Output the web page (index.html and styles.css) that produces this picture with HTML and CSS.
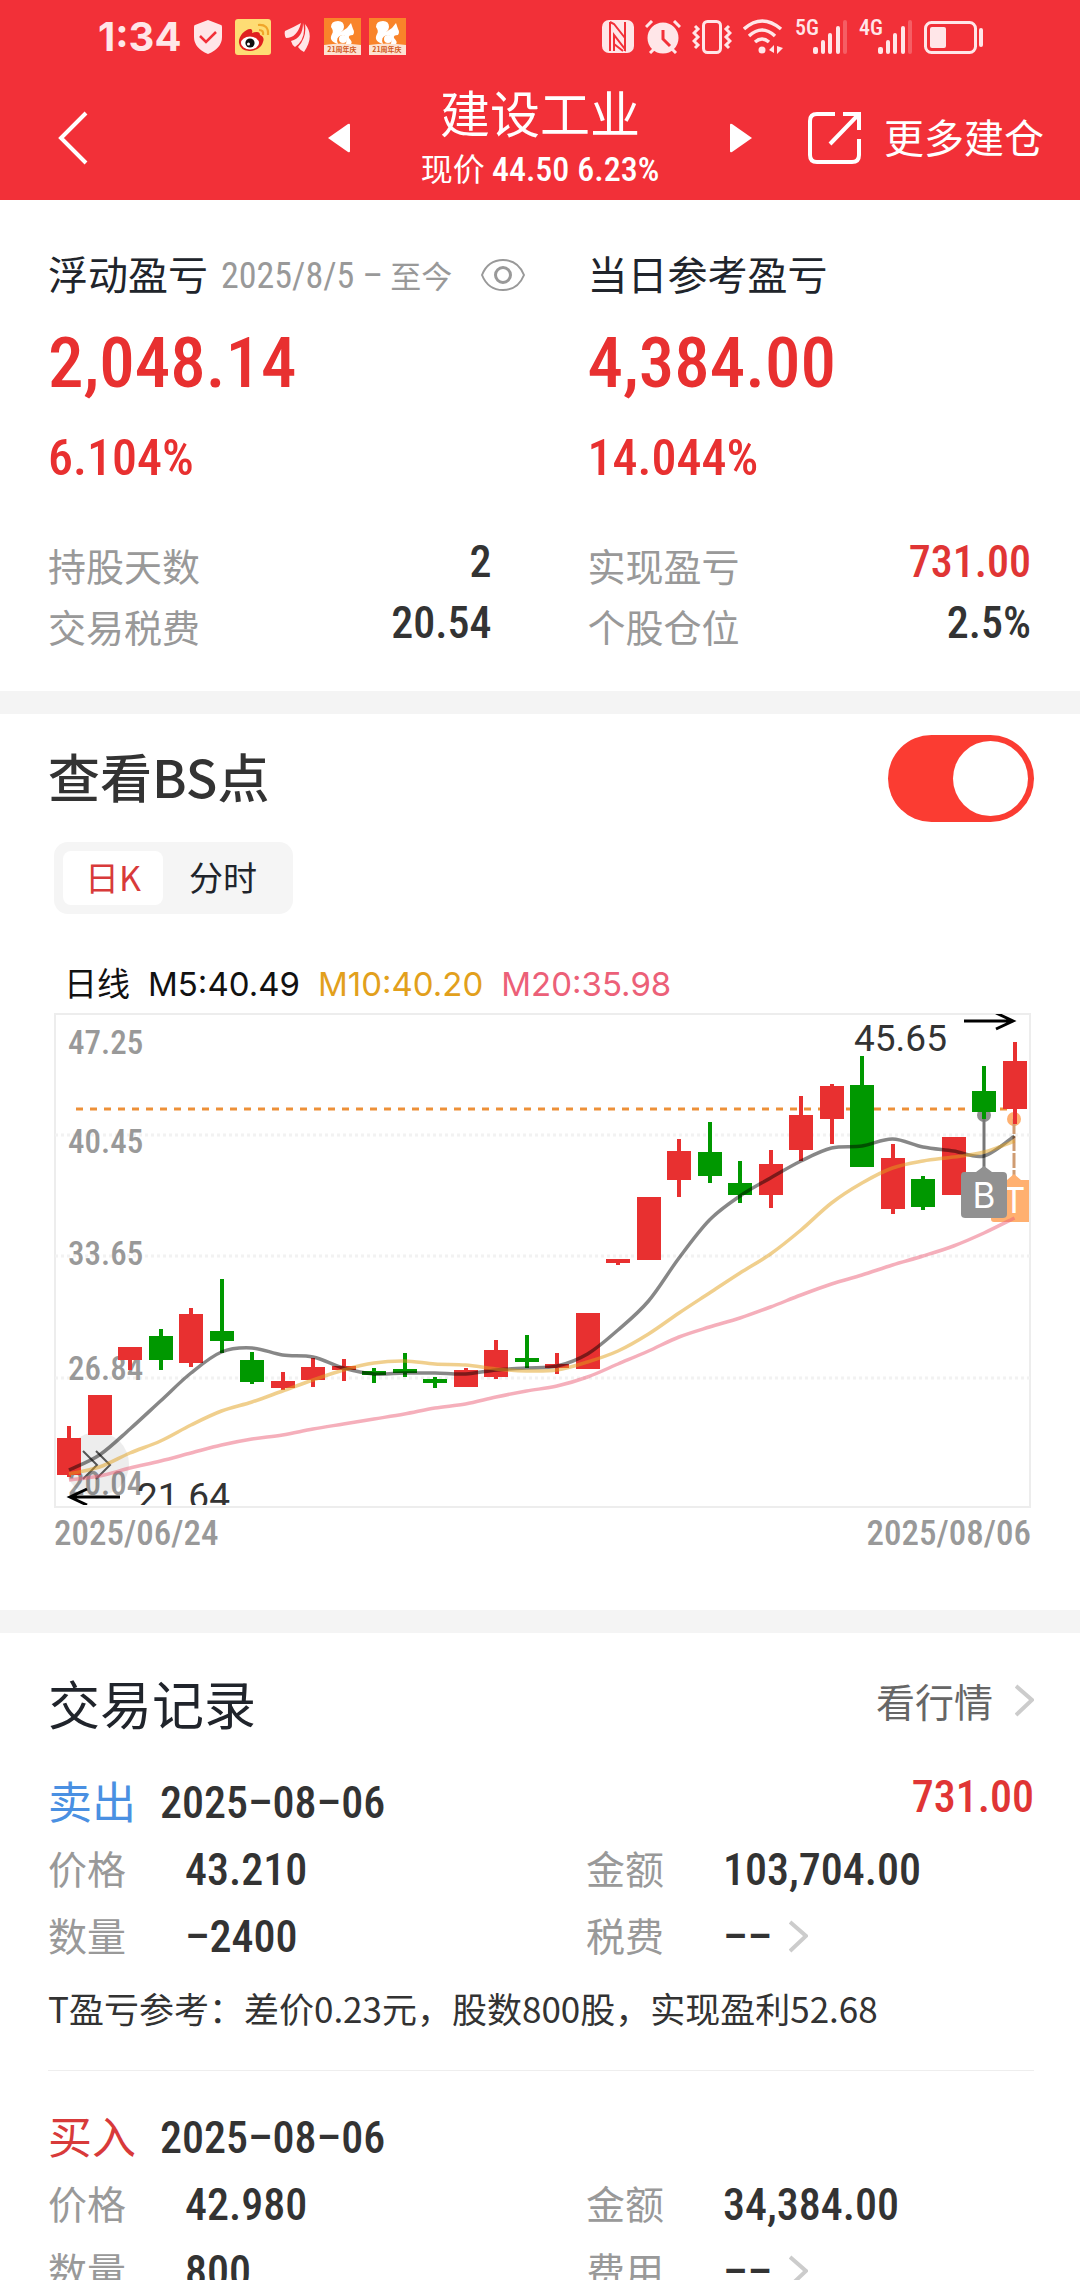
FILE: index.html
```html
<!DOCTYPE html>
<html lang="zh-CN">
<head>
<meta charset="utf-8">
<meta name="viewport" content="width=device-width, initial-scale=1">
<title>建设工业</title>
<link rel="stylesheet" href="styles.css">
</head>
<body>
<div class="app">
  <header class="header">
    <div class="status">
      <div class="status-group">
        <span class="clock">1:34</span>
        <svg width="28" height="34" viewBox="0 0 28 34"><path d="M14 0 27 5Q28 5 28 7V17Q28 28 14 34Q0 28 0 17V7Q0 5 1 5Z" fill="#ffe6e8"/><path d="M6 16 12 22 22 12" fill="none" stroke="#f23038" stroke-width="2.5"/></svg>
        <svg width="36" height="36" viewBox="0 0 36 36"><rect width="36" height="36" rx="3" fill="#fedc74"/><path d="M4 24C3 17 11 9 16 10Q18 11 17 14Q25 11 25 16Q30 18 28 23C26 30 19 32 14 32Q5 31 4 24Z" fill="#e02020"/><ellipse cx="15" cy="24" rx="9" ry="6.5" fill="#fff"/><circle cx="15" cy="24" r="4.6" fill="#111"/><circle cx="13.500" cy="25" r="1.500" fill="#fff"/><path d="M24 11Q29 11 28 16M23 6Q34 5 33 16" fill="none" stroke="#f0a52a" stroke-width="2.2"/></svg>
        <svg width="27" height="30" viewBox="0 0 27 30"><path d="M17 1Q10 5 1 9Q0 13 2 16Q13 16 17 1ZM19 1Q19 16 7 19Q8 23 11 25Q23 16 19 1ZM21 2Q23 15 14 25Q16 28 20 30Q31 14 21 2Z" fill="#ffe6e8"/></svg>
        <svg width="37" height="37" viewBox="0 0 37 37"><use href="#squirrel"/></svg>
        <svg class="tight" width="37" height="37" viewBox="0 0 37 37"><g id="squirrel"><rect width="37" height="37" fill="#f9842a"/><path d="M0 27Q18 24 37 27V37H0Z" fill="#fde3d2"/><path d="M14 26Q4 23 8 16Q10 13 7 9Q7 3 14 3Q20 3 20 9Q20 12 17 14L23 10 27 5 29 11Q31 14 29 17Q24 17 25 20Q29 24 27 26H22Q24 17 18 17Q11 19 14 26Z" fill="#fff"/><circle cx="19" cy="21" r="4" fill="#fff"/><text x="18" y="34" class="tiny" text-anchor="middle">21周年庆</text></g></svg>
      </div>
      <div class="status-group">
        <svg width="32" height="33" viewBox="0 0 32 33"><rect width="32" height="33" rx="7" fill="#ffe6e8"/><path d="M8 2V31M23 2V31" stroke="#f23038" stroke-width="2"/><path d="M8 2 12 4 23 18V29L12 15V31M12 24 21 31" fill="none" stroke="#f23038" stroke-width="2"/></svg>
        <svg width="36" height="34" viewBox="0 0 36 34" fill="none" stroke="#ffe6e8" stroke-width="3"><circle cx="18" cy="18" r="14" fill="#ffe6e8"/><path d="M1 7 7 1M35 7 29 1M5 33 9 29M31 33 27 29"/><path d="M18 10V19L25 26" stroke="#f23038"/></svg>
        <svg width="40" height="34" viewBox="0 0 40 34" fill="none" stroke="#ffe6e8" stroke-width="3"><rect x="11.500" y="1.500" width="17" height="31" rx="4"/><path d="M3 6 6 9 2 13 6 17 2 21 6 25 3 28M37 6 34 9 38 13 34 17 38 21 34 25 37 28"/></svg>
        <svg width="41" height="35" viewBox="0 0 41 35"><g fill="none" stroke="#ffe6e8" stroke-width="3.500"><path d="M1 10Q19 -6 38 10M6 17Q19 5 32 17M12 23Q19 17 26 23"/></g><circle cx="19" cy="31" r="3.500" fill="#ffe6e8"/><path d="M26 31 31 26V34M34 27V35L40 29Z" fill="#ffe6e8"/></svg>
        <svg class="bars" width="53" height="35" viewBox="0 0 53 35"><text x="0" y="16" class="net">5G</text><g fill="#ffe6e8"><rect x="18" y="28" width="5" height="7" rx="2"/><rect x="26" y="21" width="4" height="14" rx="2"/><rect x="33" y="14" width="4" height="21" rx="2"/><rect x="41" y="7" width="4" height="28" rx="2"/><rect x="48" y="1" width="4" height="34" rx="2" opacity=".25"/></g></svg>
        <svg class="bars" width="54" height="35" viewBox="0 0 54 35"><text x="0" y="16" class="net">4G</text><g fill="#ffe6e8"><rect x="19" y="28" width="5" height="7" rx="2"/><rect x="27" y="21" width="4" height="14" rx="2"/><rect x="34" y="14" width="4" height="21" rx="2"/><rect x="42" y="7" width="4" height="28" rx="2"/><rect x="49" y="1" width="4" height="34" rx="2" opacity=".25"/></g></svg>
        <svg width="60" height="34" viewBox="0 0 60 34"><rect x="1.500" y="2.500" width="50" height="30" rx="6" fill="none" stroke="#ffe6e8" stroke-width="3"/><rect x="6" y="7" width="16" height="21" rx="2" fill="#ffe6e8"/><rect x="55" y="8" width="4" height="19" rx="2" fill="#ffe6e8"/></svg>
      </div>
    </div>
    <nav class="nav">
      <button class="plain back" aria-label="返回"><svg width="30" height="56" viewBox="0 0 30 56"><path d="M28 3 3 28 28 53" fill="none" stroke="#fff" stroke-width="4"/></svg></button>
      <div class="stock">
        <button class="plain" aria-label="上一只"><svg width="24" height="30" viewBox="0 0 24 30"><path d="M1 15 21 1Q23 0 23 2V28Q23 30 21 29Z" fill="#fff"/></svg></button>
        <div class="stock-name">
          <h1>建设工业</h1>
          <p>现价 <span class="num">44.50 6.23%</span></p>
        </div>
        <button class="plain" aria-label="下一只"><svg width="24" height="30" viewBox="0 0 24 30"><path d="M23 15 3 1Q1 0 1 2V28Q1 30 3 29Z" fill="#fff"/></svg></button>
      </div>
      <button class="plain more"><svg width="54" height="54" viewBox="0 0 54 54" fill="none" stroke="#fff" stroke-width="4"><path d="M27 3H9Q2 3 2 10V44Q2 51 9 51H44Q51 51 51 44V28"/><path d="M35 3H51V19M50 4 22 33"/></svg><span class="more-text">更多建仓</span></button>
    </nav>
  </header>

  <main class="main">
    <section class="card summary">
      <div class="col">
        <div class="col-title"><h2>浮动盈亏</h2><span class="range"><span class="num">2025/8/5 –</span> 至今</span>
          <button class="plain" aria-label="隐藏金额"><svg width="44" height="32" viewBox="0 0 44 32" fill="none" stroke="#999" stroke-width="2"><path d="M1 16Q7 1 22 1T43 16Q37 31 22 31T1 16Z"/><circle cx="22" cy="16" r="7.500" stroke-width="3"/></svg></button></div>
        <p class="big num">2,048.14</p>
        <p class="pct num">6.104%</p>
        <dl class="facts">
          <div><dt>持股天数</dt><dd class="num">2</dd></div>
          <div><dt>交易税费</dt><dd class="num">20.54</dd></div>
        </dl>
      </div>
      <div class="col">
        <div class="col-title"><h2>当日参考盈亏</h2></div>
        <p class="big num">4,384.00</p>
        <p class="pct num">14.044%</p>
        <dl class="facts">
          <div><dt>实现盈亏</dt><dd class="num up">731.00</dd></div>
          <div><dt>个股仓位</dt><dd class="num">2.5%</dd></div>
        </dl>
      </div>
    </section>

    <section class="card points">
      <div class="points-head">
        <label class="points-title" for="bs">查看BS点</label>
        <input class="switch" type="checkbox" role="switch" id="bs" checked>
      </div>
      <div class="tabs"><button class="tab on">日K</button><button class="tab">分时</button></div>
      <div class="chart">
        <div class="legend"><span>日线</span><span>M5:40.49</span><span class="m10">M10:40.20</span><span class="m20">M20:35.98</span></div>
        <svg class="plot" viewBox="0 0 977 495" role="img" aria-label="日线">
          <rect x="1" y="1" width="975" height="493" class="frame"/>
          <path class="grid" d="M1 122H976M1 243H976M1 365H976"/>
          <g class="axis num"><text x="14" y="41">47.25</text><text x="14" y="140">40.45</text><text x="14" y="252">33.65</text><text x="14" y="367">26.84</text><text x="14" y="482">20.04</text></g>
          <path class="cost" d="M22 96H960"/>
          <circle cx="43" cy="451" r="32" fill="#000" fill-opacity=".07"/>
          <path d="M29 438 43 452 29 466M42 438 56 452 42 466" class="chev"/>
          <circle cx="930" cy="102" r="7" fill="#919191"/>
          <circle cx="960" cy="106" r="7" fill="#ffb070"/>
          <path d="M930 104V156" stroke="#777" stroke-width="3"/>
          <path d="M960 106V164" stroke="#cf9c72" stroke-width="3" stroke-dasharray="15 2"/>
          <g id="candles"></g>
          <path d="M940 167H953L960 161 967 167H975V209H940Q937 209 937 206V170Z" fill="#ffb070"/>
          <text x="960" y="200" class="mark">T</text>
          <path d="M910 159H922L930 153 938 159H949Q953 159 953 163V201Q953 205 949 205H911Q907 205 907 201V163Q907 159 910 159Z" fill="#919191"/>
          <text x="930" y="195" class="mark">B</text>
          <g id="averages"></g>
          <svg x="0" y="1" width="977" height="491">
            <text x="800" y="37" class="peak">45.65</text>
            <text x="83" y="495" class="peak">21.64</text>
            <path class="arrow" d="M910 7H959M942 -1 959 7 942 15"/>
            <path class="arrow" d="M66 483H16M33 475 16 483 33 491"/>
          </svg>
        </svg>
        <div class="dates num"><span>2025/06/24</span><span>2025/08/06</span></div>
      </div>
    </section>

    <section class="card records">
      <div class="records-head"><h2>交易记录</h2><a class="quote" href="#quote">看行情<svg width="19" height="33" viewBox="0 0 19 33"><path d="M1 2 17 16 1 31" class="next"/></svg></a></div>
      <article class="record">
        <div class="line"><span class="side sell">卖出</span><time class="num" datetime="2025-08-06">2025–08–06</time><span class="gain num">731.00</span></div>
        <dl class="pairs">
          <div><dt>价格</dt><dd class="num">43.210</dd></div><div><dt>金额</dt><dd class="num">103,704.00</dd></div>
          <div><dt>数量</dt><dd class="num">–2400</dd></div><div><dt>税费</dt><dd class="num">––<svg width="19" height="33" viewBox="0 0 19 33"><path d="M1 2 17 16 1 31" class="next"/></svg></dd></div>
        </dl>
        <p class="note">T盈亏参考：差价0.23元，股数800股，实现盈利52.68</p>
      </article>
      <article class="record">
        <div class="line"><span class="side buy">买入</span><time class="num" datetime="2025-08-06">2025–08–06</time></div>
        <dl class="pairs">
          <div><dt>价格</dt><dd class="num">42.980</dd></div><div><dt>金额</dt><dd class="num">34,384.00</dd></div>
          <div><dt>数量</dt><dd class="num">800</dd></div><div><dt>费用</dt><dd class="num">––<svg width="19" height="33" viewBox="0 0 19 33"><path d="M1 2 17 16 1 31" class="next"/></svg></dd></div>
        </dl>
      </article>
    </section>
  </main>
</div>
<script src="chart.js"></script>
</body>
</html>
```
FILE: styles.css
```css
* { box-sizing: border-box; margin: 0; padding: 0; }
body { font-family: "Noto Sans CJK SC", sans-serif; color: #333; background: #fff; }
h1, h2 { font-weight: 400; }
.num { font-family: "Roboto Condensed", Roboto, "Noto Sans CJK SC", sans-serif; font-weight: 500; }
.plain { border: 0; background: none; color: inherit; font: inherit; display: flex; align-items: center; }
svg { display: block; flex: none; }

.app { height: 100vh; display: flex; flex-direction: column; }
.main { flex: 1; overflow-y: auto; scrollbar-width: none; background: #f4f4f4; }
.card { background: #fff; padding: 0 46px 0 48px; }
.card + .card { margin-top: 23px; }

.header { background: #f23038; color: #fff; }
.status { height: 76px; padding: 0 96px 3px 98px; display: flex; justify-content: space-between; align-items: center; }
.status-group { display: flex; align-items: center; gap: 11px; color: #ffe6e8; }
.status-group:first-child { gap: 13px; }
.tight { margin-left: -5px; }
.bars { overflow: visible; }
.clock { font: 700 40px/48px Inter, sans-serif; }
.net { font: 500 22px "Roboto Condensed", Roboto, sans-serif; fill: #ffe6e8; }
.tiny { font: 700 7px "Noto Sans CJK SC", sans-serif; fill: #d0581a; }
.nav { height: 124px; padding: 0 36px; display: grid; grid-template-columns: 1fr auto 1fr; align-items: center; }
.back { margin-left: 22px; }
.stock { display: flex; align-items: center; justify-content: space-between; width: 426px; }
.stock-name { text-align: center; padding-bottom: 4px; }
.stock-name h1 { font-size: 50px; line-height: 64px; }
.stock-name p { font-size: 32px; line-height: 48px; white-space: nowrap; }
.stock-name .num { font-size: 34px; }
.more { justify-self: end; gap: 22px; font-size: 40px; white-space: nowrap; }
.more-text { padding-bottom: 4px; }

.summary { display: grid; grid-template-columns: minmax(0, 1fr) minmax(0, 1fr); column-gap: 96px; padding: 50px 49px 32px 48px; }
.col-title { height: 50px; display: flex; align-items: center; color: #20242b; }
.col-title h2 { font-size: 40px; line-height: 50px; padding-bottom: 5px; white-space: nowrap; }
.range { margin: 0 29px 0 13px; font-size: 31px; line-height: 50px; color: #999; white-space: nowrap; }
.range .num { font-size: 36px; font-weight: 400; }
.big { margin-top: 23px; font-size: 71px; line-height: 80px; color: #e83030; }
.pct { margin-top: 30px; font-size: 50px; line-height: 50px; color: #e83030; }
.facts { margin-top: 54px; }
.facts div { height: 61px; display: flex; justify-content: space-between; }
dt { color: #999; }
.facts dt { font-size: 38px; line-height: 56px; }
.facts dd { font-size: 44px; line-height: 50px; }
.facts .up, .gain { color: #e03535; }

.points { padding-top: 21px; padding-bottom: 56px; }
.points-head { display: flex; justify-content: space-between; align-items: center; }
.points-title { font-size: 52px; line-height: 60px; font-weight: 500; padding-bottom: 6px; }
.switch { appearance: none; width: 146px; height: 87px; border-radius: 44px; background: #fb3c32; display: flex; justify-content: flex-end; padding: 6px; }
.switch::before { content: ""; width: 75px; border-radius: 50%; background: #fff; }
.tabs { margin: 20px 0 0 6px; width: 239px; height: 72px; padding: 9px; border-radius: 14px; background: #f5f5f5; display: flex; }
.tab { border: 0; border-radius: 8px; background: none; padding: 0 26px 2px; font: 400 34px/52px "Noto Sans CJK SC", sans-serif; color: #20242b; white-space: nowrap; }
.tab.on { background: #fff; color: #d83a3a; padding: 0 22px 2px; }
.chart { margin: 50px 3px 0 6px; }
.legend { height: 49px; padding-left: 10px; display: flex; gap: 18px; font: 400 33px/40px Inter, "Noto Sans CJK SC", sans-serif; color: #111; white-space: nowrap; }
.legend .m10 { color: #e2a01c; }
.legend .m20 { color: #ec6078; }
.plot { width: 100%; height: auto; }
.frame { fill: none; stroke: #ededed; stroke-width: 2; }
.grid { fill: none; stroke: #f2f2f2; stroke-width: 3; stroke-dasharray: 3 3; }
.axis { font-size: 33px; fill: #999; }
.cost { fill: none; stroke: #ed9038; stroke-width: 3; stroke-dasharray: 7 7; }
.chev { fill: none; stroke: #555; stroke-width: 2; }
.mark { font: 400 35px Inter, sans-serif; fill: #fff; text-anchor: middle; }
.peak { font: 400 37px Roboto, sans-serif; fill: #333; }
.arrow { fill: none; stroke: #000; stroke-width: 3; }
.up-bar { fill: #e83030; }
.down-bar { fill: #009800; }
.avg { fill: none; stroke-width: 3.5; }
.avg5 { stroke: rgba(0, 0, 0, .47); }
.avg10 { stroke: rgba(226, 160, 28, .5); }
.avg20 { stroke: rgba(236, 96, 120, .5); }
.dates { margin-top: 6px; display: flex; justify-content: space-between; font-size: 35px; line-height: 40px; color: #999; }

.records { padding-top: 38px; }
.records-head { height: 70px; margin-bottom: 28px; display: flex; justify-content: space-between; align-items: center; }
.records-head h2 { font-size: 52px; line-height: 64px; padding-bottom: 6px; color: #20242b; }
.quote { display: flex; align-items: center; gap: 22px; font-size: 39px; line-height: 56px; color: #666; text-decoration: none; margin-bottom: 12px; }
.next { fill: none; stroke: #ccc; stroke-width: 4; }
.record + .record { border-top: 1px solid #eee; padding-top: 33px; }
.line { height: 67px; display: flex; align-items: center; font-size: 44px; }
.side { width: 112px; line-height: 60px; padding-bottom: 5px; }
.sell { color: #4a90e2; }
.buy { color: #d83a3a; }
.gain { margin: 0 0 12px auto; }
.pairs { display: grid; grid-template-columns: 1fr 1fr; column-gap: 90px; }
.pairs div { height: 67px; display: flex; align-items: center; }
.pairs dt { width: 137px; font-size: 39px; line-height: 60px; padding-bottom: 5px; }
.pairs dd { display: flex; align-items: center; gap: 17px; font-size: 44px; white-space: nowrap; }
.note { padding: 8px 0 32px; font-size: 35px; line-height: 60px; }
```
FILE: chart.js
```js
// Plot coordinates: one day every 30.5 units, y grows downwards.
const step = 30.5, first = 15;
// [direction, high, open/close top, open/close bottom, low]
const days = [
  [1,413,425,462,464],[1,382,382,422,422],[1,334,334,347,357],[0,316,323,347,357],
  [1,295,301,350,354],[0,266,318,328,340],[0,339,347,369,371],[1,359,368,375,377],
  [1,345,354,367,374],[1,346,353,357,368],[0,355,358,362,370],[0,340,356,360,364],
  [0,364,366,370,375],[1,355,357,374,374],[1,327,337,364,366],[0,322,345,349,355],
  [1,340,351,355,361],[1,300,300,356,356],[1,246,246,250,252],[1,184,184,247,247],
  [1,126,138,167,184],[0,109,139,163,170],[0,148,170,182,190],[1,137,151,182,195],
  [1,83,102,137,148],[1,71,73,106,131],[0,43,72,154,154],[1,131,145,196,201],
  [0,163,166,194,197],[1,124,124,182,182],[0,53,78,99,106],[1,29,48,96,111]
];
const averages = {
  avg5: [457,442,416,388,360,339,335,342,344,355,361,360,360,361,357,355,353,341,317,288,245,207,183,165,148,135,133,126,134,138,143,123],
  avg10: [461,454,440,428,412,398,389,378,367,357,350,348,351,352,356,358,357,349,338,321,300,280,260,241,217,190,170,155,148,144,139,128],
  avg20: [467,463,455,448,440,432,426,422,416,411,406,401,395,391,384,378,373,364,351,338,324,314,305,294,282,271,262,252,243,233,220,205]
};
const ns = "http://www.w3.org/2000/svg";
const add = (parent, tag, attrs) => {
  const el = document.createElementNS(ns, tag);
  for (const key in attrs) el.setAttribute(key, attrs[key]);
  parent.appendChild(el);
};
const candles = document.getElementById("candles");
days.forEach(([up, high, top, bottom, low], i) => {
  const x = Math.round(first + i * step), cls = up ? "up-bar" : "down-bar";
  add(candles, "rect", { class: cls, x: x - 2, y: high, width: 4, height: low - high });
  add(candles, "rect", { class: cls, x: x - 12, y: top, width: 24, height: bottom - top });
});
for (const cls in averages) {
  const pts = averages[cls].map((y, i) => [first + i * step, y]);
  let d = "M" + pts[0];
  for (let i = 1; i < pts.length; i++) {
    const a = pts[Math.max(i - 2, 0)], b = pts[i - 1], c = pts[i], e = pts[Math.min(i + 1, pts.length - 1)];
    d += "C" + [b[0] + (c[0] - a[0]) / 6, b[1] + (c[1] - a[1]) / 6, c[0] - (e[0] - b[0]) / 6, c[1] - (e[1] - b[1]) / 6, c[0], c[1]];
  }
  add(document.getElementById("averages"), "path", { class: "avg " + cls, d });
}
```
